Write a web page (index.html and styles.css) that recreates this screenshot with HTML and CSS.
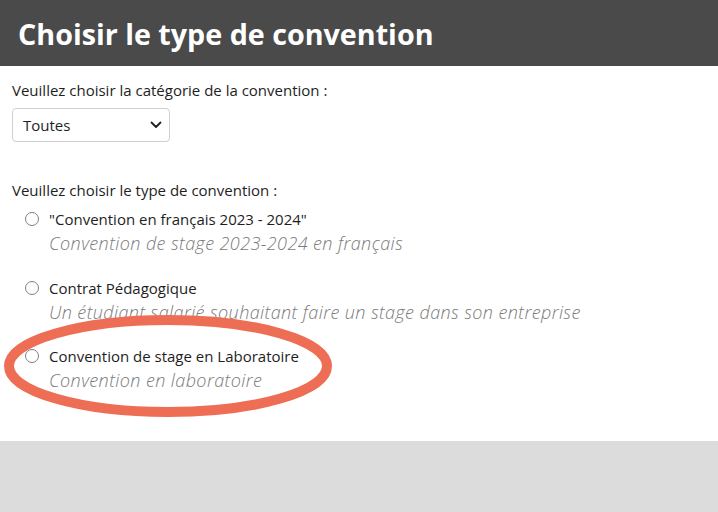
FILE: index.html
```html
<!DOCTYPE html>
<html lang="fr">
<head>
<meta charset="utf-8">
<title>Choisir le type de convention</title>
<link rel="stylesheet" href="styles.css">
</head>
<body>
<div class="panel">
  <header class="head"><h1>Choisir le type de convention</h1></header>
  <div class="content">
    <label class="lbl" for="cat">Veuillez choisir la catégorie de la convention :</label>
    <div class="select">
      <span>Toutes</span>
      <svg width="12" height="8" viewBox="0 0 12 8"><path d="M1.5 1.5 L6 6 L10.5 1.5" fill="none" stroke="#222" stroke-width="1.8" stroke-linecap="round" stroke-linejoin="round"/></svg>
    </div>
    <p class="lbl type">Veuillez choisir le type de convention :</p>
    <ul class="options">
      <li class="opt">
        <div class="row"><span class="radio"></span><span class="name">"Convention en français 2023 - 2024"</span></div>
        <div class="desc">Convention de stage 2023-2024 en français</div>
      </li>
      <li class="opt">
        <div class="row"><span class="radio"></span><span class="name">Contrat Pédagogique</span></div>
        <div class="desc">Un étudiant salarié souhaitant faire un stage dans son entreprise</div>
      </li>
      <li class="opt">
        <div class="row"><span class="radio"></span><span class="name">Convention de stage en Laboratoire</span></div>
        <div class="desc">Convention en laboratoire</div>
      </li>
    </ul>
  </div>
  <svg class="mark" width="340" height="110" viewBox="0 0 340 110"><ellipse cx="168" cy="52" rx="159" ry="46" fill="none" stroke="#ee6e55" stroke-width="10"/></svg>
</div>
</body>
</html>
```
FILE: styles.css
```css
html, body { margin: 0; padding: 0; }
body {
  background: #dcdcdc;
  font-family: "Open Sans", Lato, sans-serif;
  color: #1e1e1e;
  width: 718px;
  height: 512px;
  overflow: hidden;
}
.panel {
  position: relative;
  background: #fff;
  height: 441px;
}
.head {
  background: #4a4a4a;
  height: 66px;
  display: flex;
  align-items: center;
  padding-left: 18px;
}
.head h1 {
  margin: 0;
  color: #fff;
  font-size: 28.7px;
  font-weight: 700;
  line-height: 40px;
  padding-top: 2px;
}
.content {
  padding: 14px 12px 0;
}
.lbl {
  display: block;
  font-size: 15px;
  line-height: 20px;
  margin: 0;
}
.select {
  margin-top: 8px;
  border: 1px solid #cfcfcf;
  border-radius: 4px;
  display: flex;
  align-items: center;
  justify-content: space-between;
  padding: 0 7px 0 10px;
  box-sizing: border-box;
  width: 158px;
  height: 34px;
  font-size: 15px;
}
.type { margin-top: 38px; }
.options {
  list-style: none;
  margin: 0;
  padding: 0;
}
.opt { margin-top: 20.5px; }
.opt:first-child { margin-top: 7px; }
.row {
  display: flex;
  align-items: center;
  height: 24px;
}
.radio {
  width: 14px;
  height: 14px;
  border: 1.2px solid #808080;
  border-radius: 50%;
  margin-left: 13px;
  margin-right: 10px;
  box-sizing: border-box;
  flex: none;
}
.name { font-size: 15px; color: #1e1e1e; }
.desc {
  padding-left: 37px;
  font-size: 18px;
  font-weight: 300;
  letter-spacing: 0.4px;
  font-style: italic;
  color: #7a7a7a;
  line-height: 24px;
}
.mark {
  position: absolute;
  left: 0;
  top: 314px;
}
```
